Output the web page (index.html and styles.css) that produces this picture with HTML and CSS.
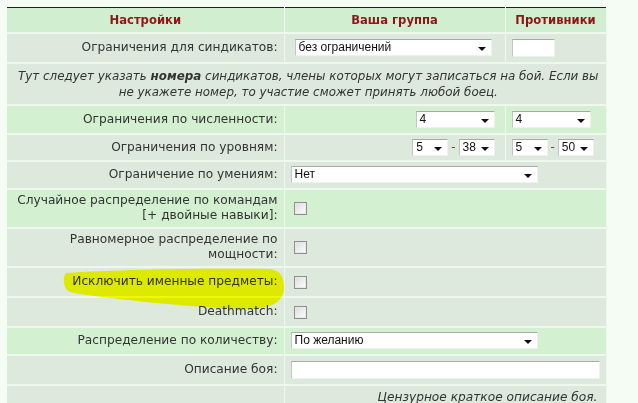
FILE: index.html
```html
<!DOCTYPE html>
<html lang="ru">
<head>
    <meta charset="UTF-8">
    <title>Настройки боя</title>
    <link rel="stylesheet" href="styles.css">
</head>
<body>
    <table class="settings">
        <tr class="head">
            <th class="col-label">Настройки</th>
            <th class="col-own">Ваша группа</th>
            <th class="col-enemy">Противники</th>
        </tr>
        <tr class="grey r-30">
            <td class="label">Ограничения для синдикатов:</td>
            <td class="field pad-syn"><div class="select w-syn"><span>без ограничений</span></div></td>
            <td class="field pad-syn"><div class="textbox w-enemy"></div></td>
        </tr>
        <tr class="grey r-42">
            <td class="note" colspan="3">Тут следует указать <b>номера</b> синдикатов, члены которых могут записаться на бой. Если вы<br>не укажете номер, то участие сможет принять любой боец.</td>
        </tr>
        <tr class="green r-29">
            <td class="label">Ограничения по численности:</td>
            <td class="field right"><div class="select w-num"><span>4</span></div></td>
            <td class="field"><div class="select w-num"><span>4</span></div></td>
        </tr>
        <tr class="grey r-27">
            <td class="label">Ограничения по уровням:</td>
            <td class="field right">
                <div class="range">
                    <div class="select w-lvl"><span>5</span></div><span class="dash">-</span><div class="select w-lvl"><span>38</span></div>
                </div>
            </td>
            <td class="field">
                <div class="range">
                    <div class="select w-lvl"><span>5</span></div><span class="dash">-</span><div class="select w-lvl"><span>50</span></div>
                </div>
            </td>
        </tr>
        <tr class="grey r-28">
            <td class="label">Ограничение по умениям:</td>
            <td class="field" colspan="2"><div class="select w-wide"><span>Нет</span></div></td>
        </tr>
        <tr class="green r-39">
            <td class="label">Случайное распределение по командам<br>[+ двойные навыки]:</td>
            <td class="field" colspan="2"><span class="check"></span></td>
        </tr>
        <tr class="grey r-39">
            <td class="label">Равномерное распределение по<br>мощности:</td>
            <td class="field" colspan="2"><span class="check"></span></td>
        </tr>
        <tr class="grey r-30">
            <td class="label">Исключить именные предметы:</td>
            <td class="field" colspan="2"><span class="check"></span></td>
        </tr>
        <tr class="grey r-30">
            <td class="label">Deathmatch:</td>
            <td class="field" colspan="2"><span class="check"></span></td>
        </tr>
        <tr class="green r-28">
            <td class="label">Распределение по количеству:</td>
            <td class="field" colspan="2"><div class="select w-wide"><span>По желанию</span></div></td>
        </tr>
        <tr class="grey r-30">
            <td class="label">Описание боя:</td>
            <td class="field" colspan="2"><div class="textbox w-desc"></div></td>
        </tr>
        <tr class="grey r-last">
            <td class="label"></td>
            <td class="hint" colspan="2">Цензурное краткое описание боя.</td>
        </tr>
    </table>

    <!-- marker stroke somebody drew over the screenshot -->
    <svg class="marker" width="226" height="46" viewBox="0 0 226 46">
        <path d="M4 6 C60 2 150 1 205 2 C218 2 222 10 222 20 C222 32 214 41 190 42 C150 42 90 36 40 30 C18 27 6 26 4 22 C1 16 1 9 4 6 Z" fill="#ffff00"/>
    </svg>
</body>
</html>
```

FILE: styles.css
```css
* {
    box-sizing: border-box;
}

body {
    margin: 0;
    background: #f4fcf4;
    font-family: "DejaVu Sans", Verdana, sans-serif;
    font-size: 12.2px;
    color: #333333;
    position: relative;
    overflow: hidden;
}

.settings {
    margin: 7px 0 0 7px;
    width: 599px;
    border-collapse: collapse;
    border-top: 1px solid #142814;
    table-layout: fixed;
}

.settings td,
.settings th {
    border: 1px solid #eef8ee;
    border-width: 0 1px 2px 0;
    padding: 0;
}

.col-label { width: 277px; }
.col-own { width: 221px; }
.col-enemy { width: 101px; }

.head {
    height: 25px;
    background: #d1eed1;
}

.head th {
    color: #8e1616;
    font-weight: bold;
    font-size: 11.6px;
    text-align: center;
}

.grey { background: #dde9dc; }
.green { background: #d3f1d1; }

.r-27 { height: 27px; }
.r-28 { height: 28px; }
.r-29 { height: 29px; }
.r-30 { height: 30px; }
.r-39 { height: 39px; }
.r-42 { height: 42px; }
.r-last { height: 24px; }

.label {
    text-align: right;
    padding-right: 6px !important;
    line-height: 15px;
}

.note {
    text-align: center;
    font-style: italic;
    font-size: 11.9px;
    white-space: nowrap;
    line-height: 16px;
    padding: 3px 0 3px 4px !important;
}

.hint {
    text-align: right;
    font-style: italic;
    padding: 4px 8px 0 0 !important;
    vertical-align: top;
}

.field {
    padding-left: 6px !important;
}

.field.right {
    text-align: right;
    padding-right: 10px !important;
}

.pad-syn {
    padding-left: 10px !important;
}

.pad-syn + .pad-syn {
    padding-left: 6px !important;
}

.select,
.textbox {
    display: inline-block;
    vertical-align: middle;
    height: 17px;
    background: #ffffff;
    border: 1px solid;
    border-color: #a9a9a9 #f0f0f0 #f0f0f0 #c4c4c4;
    font-family: "Liberation Sans", Arial, sans-serif;
    font-size: 12px;
    line-height: 15px;
    color: #111111;
    text-align: left;
    position: relative;
}

.select span {
    padding-left: 3px;
}

.select::after {
    content: "";
    position: absolute;
    right: 5px;
    top: 7px;
    border-left: 4px solid transparent;
    border-right: 4px solid transparent;
    border-top: 4px solid #111111;
}

.w-syn { width: 197px; }
.w-enemy { width: 43px; height: 18px; }
.w-num { width: 79px; }
.w-lvl { width: 36px; }
.w-wide { width: 247px; }
.w-desc { width: 309px; height: 18px; }

.range {
    display: inline-flex;
    align-items: center;
    gap: 2px;
}

.dash {
    color: #555555;
    font-size: 12px;
    padding: 0 1px;
}

.check {
    display: inline-block;
    vertical-align: middle;
    width: 13px;
    height: 13px;
    margin-left: 3px;
    border: 1px solid #8f8f8f;
    background: linear-gradient(135deg, #dcdcdc 0%, #f4f4f4 70%, #ffffff 100%);
    box-shadow: inset 0 0 0 1px #e8e8e8;
}

.marker {
    position: absolute;
    left: 62px;
    top: 267px;
    mix-blend-mode: multiply;
    pointer-events: none;
    filter: blur(0.6px);
}
```
